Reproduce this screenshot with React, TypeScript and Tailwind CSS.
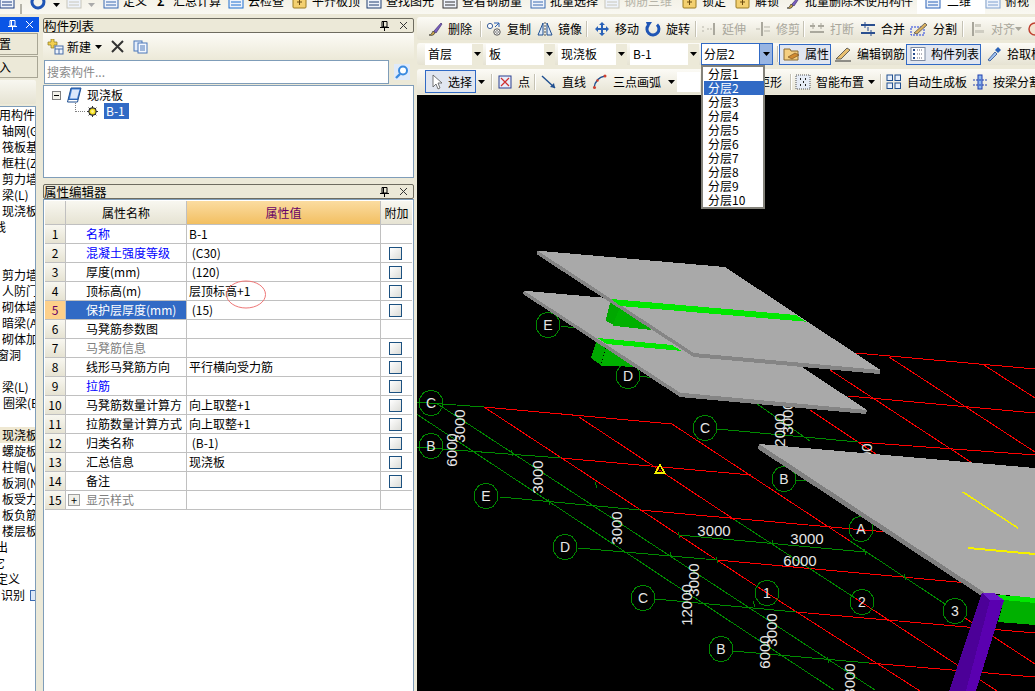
import type { ReactNode } from "react";

type Seg = [number, number, number, number];

const RED = "#ff0000";
const GREEN = "#008a00";

// ---- small toolbar icons ----
const Ic = ({ children, w = 16 }: { children: ReactNode; w?: number }) => (
  <svg width={w} height={16} viewBox={`0 0 ${w} 16`} className="shrink-0 block">
    {children}
  </svg>
);

const BrushIcon = () => (
  <Ic>
    <path d="M2 14 C4 14 5 12 6 10 L8 12 C7 14 5 15 2 14Z" fill="#c9a24a" stroke="#333" strokeWidth=".7" />
    <path d="M7 10 L14 2 L15 3 L9 12Z" fill="#7a5fc0" stroke="#403070" strokeWidth=".7" />
  </Ic>
);
const CopyIcon = () => (
  <Ic>
    <circle cx="4" cy="5" r="2.6" fill="#fff" stroke="#3a5f9a" />
    <circle cx="11" cy="11" r="3.2" fill="#fff" stroke="#555" />
    <circle cx="11" cy="11" r="1.4" fill="none" stroke="#888" />
    <path d="M8 2 L13 2 L13 6 M13 2 L9 6" fill="none" stroke="#2a5fb0" strokeWidth="1" />
  </Ic>
);
const MirrorIcon = () => (
  <Ic>
    <path d="M6 2 L6 14 L1 14Z" fill="#dfe9f7" stroke="#1f4f90" />
    <path d="M10 2 L10 14 L15 14Z" fill="#dfe9f7" stroke="#1f4f90" />
    <path d="M8 1 V15" stroke="#555" strokeDasharray="2 1" />
  </Ic>
);
const MoveIcon = () => (
  <Ic>
    <path
      d="M8 1 L11 4 H9 V7 H12 V5 L15 8 L12 11 V9 H9 V12 H11 L8 15 L5 12 H7 V9 H4 V11 L1 8 L4 5 V7 H7 V4 H5Z"
      fill="#2a62b8"
    />
  </Ic>
);
const RotateIcon = () => (
  <Ic>
    <path d="M3.5 4 A6 6 0 1 0 12 3.6" fill="none" stroke="#1f55b5" strokeWidth="3" />
    <path d="M1 1 L7 1 L3 7Z" fill="#1f55b5" />
  </Ic>
);
const ExtendIcon = () => (
  <Ic>
    <path d="M1 6 H4 M1 10 H4 M6 8 H11" stroke="#b5b3a8" strokeDasharray="2 1" />
    <path d="M13 2 V14" stroke="#aaa89d" strokeWidth="2" />
  </Ic>
);
const TrimIcon = () => (
  <Ic>
    <path d="M7 1 V15" stroke="#aaa89d" strokeWidth="2" />
    <path d="M1 8 H5 M9 6 H15 M9 10 H15" stroke="#b5b3a8" />
  </Ic>
);
const BreakIcon = () => (
  <Ic>
    <path d="M1 5 H6 M9 5 H15 M1 11 H15" stroke="#aaa89d" strokeWidth="2" />
    <path d="M4 2 V8 M12 2 V8" stroke="#aaa89d" />
  </Ic>
);
const MergeIcon = () => (
  <Ic>
    <path d="M1 4 H15 M1 12 H15" stroke="#2a4f8f" strokeWidth="2" />
    <path d="M5 1 V7 M11 9 V15 M8 6 V10" stroke="#2a4f8f" />
  </Ic>
);
const SplitIcon = () => (
  <Ic w={18}>
    <rect x="1" y="6" width="13" height="8" fill="none" stroke="#1f3fe0" strokeDasharray="2 1" />
    <path d="M4 12 L15 2 L17 4 L7 13Z" fill="#d8b060" stroke="#444" strokeWidth=".7" />
  </Ic>
);
const AlignIcon = () => (
  <Ic>
    <path d="M3 1 V15" stroke="#a8a69b" strokeWidth="2" />
    <rect x="5" y="3" width="6" height="3" fill="#cfcdc2" />
    <rect x="5" y="9" width="9" height="3" fill="#cfcdc2" />
  </Ic>
);
const CircleToolIcon = () => (
  <Ic>
    <circle cx="8" cy="8" r="6" fill="#f3e3d0" stroke="#c04030" strokeWidth="1.5" />
  </Ic>
);
const FolderIcon = () => (
  <Ic w={18}>
    <path d="M1 3 H7 L8 5 H15 V14 H1Z" fill="#f5cf80" stroke="#8a6a30" />
    <path d="M5 11 L12 7 L16 9 L9 13Z" fill="#d08a30" stroke="#6a4a20" strokeWidth=".6" />
  </Ic>
);
const PencilIcon = () => (
  <Ic w={18}>
    <path d="M2 13 L5 10 L13 2 L16 4 L7 13Z" fill="#e8c070" stroke="#444" strokeWidth=".8" />
    <path d="M1 15 H17" stroke="#333" />
  </Ic>
);
const ListIcon = () => (
  <Ic>
    <rect x="1" y="1.5" width="14" height="13" fill="#fff" stroke="#7d8aa0" />
    <path d="M3 4 H5 M3 8 H5 M3 12 H5" stroke="#2a4f8f" strokeWidth="2" />
    <path d="M7 4 H13 M7 8 H13 M7 12 H13" stroke="#667" strokeDasharray="1 1" />
  </Ic>
);
const PipetteIcon = () => (
  <Ic>
    <path d="M2 14 L9 6 L11 8 L4 15Z" fill="#9fc0ee" stroke="#2a4f8f" strokeWidth=".8" />
    <path d="M9 4 L12 1 L15 4 L12 7Z" fill="#2a62b8" />
  </Ic>
);
const CursorIcon = () => (
  <Ic>
    <path d="M4 1 L4 13 L7 10 L9 15 L11 14 L9 9 L13 9Z" fill="#fff" stroke="#555" strokeWidth=".8" />
  </Ic>
);
const PointIcon = () => (
  <Ic>
    <rect x="2" y="2" width="12" height="12" fill="#e8eefb" stroke="#2a3f90" />
    <path d="M4 4 L12 12 M12 4 L4 12" stroke="#d03030" strokeWidth="1.2" />
  </Ic>
);
const LineIcon = () => (
  <Ic>
    <path d="M1 2 L14 14" stroke="#1f4f90" strokeWidth="1.4" />
    <path d="M14 14 L9 13 L13 9Z" fill="#1f4f90" />
  </Ic>
);
const ArcIcon = () => (
  <Ic>
    <path d="M2 14 C3 7 7 3 13 2" fill="none" stroke="#1f4f90" strokeWidth="1.3" />
    <circle cx="2.5" cy="13.5" r="1.5" fill="#d04030" />
    <circle cx="5.5" cy="6.5" r="1.2" fill="#d04030" />
    <circle cx="13" cy="2" r="1.5" fill="#d04030" />
  </Ic>
);
const SmartIcon = () => (
  <Ic>
    <rect x="1" y="1" width="14" height="14" fill="#e6ecf6" stroke="#555" strokeDasharray="1 1" />
    <path d="M5 5 H6 M10 5 H11 M8 8 H9 M5 11 H6 M10 11 H11" stroke="#222" strokeWidth="2" />
  </Ic>
);
const GridIcon = () => (
  <Ic>
    {[1, 9].map((x) =>
      [1, 9].map((y) => <rect key={`${x}-${y}`} x={x} y={y} width="5.5" height="5.5" fill="#e8f0fb" stroke="#1f4f90" />),
    )}
  </Ic>
);
const BeamIcon = () => (
  <Ic>
    <rect x="6" y="1" width="4" height="14" fill="#8fb8ee" stroke="#1f3fb0" />
    <path d="M1 6 H15 M1 11 H15" stroke="#1f3fb0" strokeDasharray="2 1" />
  </Ic>
);
const DocIcon = ({ color = "#3a6ab0" }: { color?: string }) => (
  <Ic>
    <rect x="1" y="2" width="14" height="12" fill="#eef3fb" stroke={color} />
    <path d="M3 5 H13 M3 8 H13 M3 11 H13" stroke={color} />
  </Ic>
);
const LockIcon = () => (
  <Ic>
    <rect x="1" y="3" width="13" height="11" rx="1" fill="#f3d070" stroke="#9a7a20" />
    <path d="M5 8 H10 M7.5 6 V11" stroke="#6a4a10" />
  </Ic>
);
const Caret = ({ color = "#000" }: { color?: string }) => (
  <svg width="7" height="4" viewBox="0 0 7 4" className="shrink-0">
    <path d="M0 0 H7 L3.5 4Z" fill={color} />
  </svg>
);
const PinIcon = ({ color = "#000" }: { color?: string }) => (
  <svg width="9" height="10" viewBox="0 0 9 10" className="shrink-0">
    <path d="M2 0.5 H7 V6 H2Z M3.5 1 V6 M0 6.5 H9 M4.5 6.5 V10" fill="none" stroke={color} />
  </svg>
);
const CloseIcon = ({ color = "#333" }: { color?: string }) => (
  <svg width="9" height="9" viewBox="0 0 9 9" className="shrink-0">
    <path d="M1 1 L8 8 M8 1 L1 8" stroke={color} />
  </svg>
);

// ---- toolbars ----
const Tool = ({
  icon,
  label,
  className,
  gray,
}: {
  icon: ReactNode;
  label: string;
  className: string;
  gray?: boolean;
}) => (
  <div className={`flex items-center gap-[5px] shrink-0 whitespace-nowrap ${gray ? "text-[#a9a79c]" : "text-black"} ${className}`}>
    {icon}
    <span>{label}</span>
  </div>
);
const Sep = ({ className }: { className: string }) => (
  <div className={`shrink-0 h-[16px] flex ${className}`}>
    <div className="w-px h-full bg-[#c5c2b4]" />
    <div className="w-px h-full bg-white" />
  </div>
);
const Bar = ({ className, children }: { className: string; children: ReactNode }) => (
  <div className={`flex items-center overflow-hidden rounded-l-[3px] bg-gradient-to-b from-[#fcfbf6] to-[#e6e3d3] text-[12px] leading-[14px] ${className}`}>
    {children}
  </div>
);
const Combo = ({ label, w, ml }: { label: string; w: string; ml: string }) => (
  <div className={`flex h-[21px] bg-white ${w} ${ml} shrink-0`}>
    <div className="flex-1 pl-[3px] leading-[20px] whitespace-nowrap overflow-hidden">{label}</div>
    <div className="w-[11px] flex items-center justify-center bg-[#ece9d8]">
      <Caret />
    </div>
  </div>
);

const TopItem = ({ icon, label, className, gray }: { icon: ReactNode; label?: string; className: string; gray?: boolean }) => (
  <div className={`flex items-end gap-[4px] shrink-0 whitespace-nowrap ${gray ? "text-[#b5b3a8]" : "text-black"} ${className}`}>
    <div className="-mb-[2px]">{icon}</div>
    {label && <span>{label}</span>}
  </div>
);

const TopBar = () => (
  <div className="h-[14px] shrink-0 flex items-end overflow-hidden pb-[6px] text-[12px] leading-[14px] bg-gradient-to-b from-[#f4f2e8] to-[#f9f8f2]">
    <TopItem className="w-[21px] -ml-px" icon={<DocIcon color="#1f3f80" />} />
    <div className="w-[2px] h-[10px] bg-[#b5b3a8] mr-[8px] -mb-[6px] shrink-0" />
    <TopItem className="w-[23px]" icon={<RotateIcon />} />
    <div className="w-[13px] shrink-0 mb-[1px]"><Caret /></div>
    <TopItem gray className="w-[22px]" icon={<DocIcon color="#c8c6ba" />} />
    <div className="w-[15px] shrink-0 mb-[1px]"><Caret color="#aaa" /></div>
    <TopItem className="w-[54px]" label="定义" icon={<DocIcon />} />
    <div className="flex items-end w-[71px] shrink-0 gap-[8px] font-bold">
      <span className="w-[8px]">Σ</span>
      <span className="font-normal">汇总计算</span>
    </div>
    <TopItem className="w-[64px]" label="云检查" icon={<DocIcon color="#1f6fd0" />} />
    <TopItem className="w-[74px]" label="平齐板顶" icon={<LockIcon />} />
    <TopItem className="w-[76px]" label="查找图元" icon={<DocIcon color="#203f70" />} />
    <TopItem className="w-[88px]" label="查看钢筋量" icon={<DocIcon color="#333" />} />
    <TopItem className="w-[74px]" label="批量选择" icon={<DocIcon />} />
    <TopItem gray className="w-[78px]" label="钢筋三维" icon={<DocIcon color="#c8c6ba" />} />
    <TopItem className="w-[53px]" label="锁定" icon={<LockIcon />} />
    <TopItem className="w-[50px]" label="解锁" icon={<LockIcon />} />
    <TopItem className="w-[132px]" label="批量删除未使用构件" icon={<BrushIcon />} />
    <div className="flex items-end w-[68px] shrink-0 bg-white -mb-[6px] pb-[6px] pl-[8px] gap-[6px]">
      <div className="-mb-[2px]"><DocIcon color="#2a62b8" /></div>
      <span>二维</span>
    </div>
    <TopItem className="w-[50px]" label="俯视" icon={<DocIcon color="#7fa0d0" />} />
  </div>
);

// ---- left strip ----
const leftItems: [string, string][] = [
  ["用构件类型", "-ml-[1px]"],
  ["轴网(G)", "ml-[2px]"],
  ["筏板基础", "ml-[2px]"],
  ["框柱(Z)", "ml-[2px]"],
  ["剪力墙(Q)", "ml-[2px]"],
  ["梁(L)", "ml-[2px]"],
  ["现浇板(B)", "ml-[2px]"],
  ["线", "-ml-[6px]"],
  ["", ""],
  ["", ""],
  ["剪力墙", "ml-[2px]"],
  ["人防门(R)", "ml-[2px]"],
  ["砌体墙(Q)", "ml-[2px]"],
  ["暗梁(A)", "ml-[2px]"],
  ["砌体加筋", "ml-[2px]"],
  ["窗洞", "-ml-[3px]"],
  ["", ""],
  ["梁(L)", "ml-[2px]"],
  ["圈梁(B)", "ml-[3px]"],
  ["", ""],
  ["现浇板", "ml-[2px]"],
  ["螺旋板", "ml-[2px]"],
  ["柱帽(V)", "ml-[2px]"],
  ["板洞(N)", "ml-[2px]"],
  ["板受力筋", "ml-[2px]"],
  ["板负筋", "ml-[2px]"],
  ["楼层板带", "ml-[2px]"],
  ["出", "-ml-[4px]"],
  ["它", "-ml-[7px]"],
  ["定义", "-ml-[4px]"],
  ["识别", "ml-[1px]"],
];

const LeftStrip = () => (
  <div className="w-[38px] shrink-0 flex flex-col pt-[3px] text-[12px] leading-[16px]">
    <div className="h-[15px] w-[39px] bg-[#0a55e6] flex items-center justify-end gap-[8px] pr-[5px] relative">
      <PinIcon color="#fff" />
      <CloseIcon color="#fff" />
    </div>
    <div className="mt-[1px] h-[22px] border-y border-r border-[#a8a594] bg-[#ece9d8] overflow-hidden leading-[20px] -ml-px">置</div>
    <div className="mt-[1px] h-[22px] border-y border-r border-[#a8a594] bg-[#ece9d8] overflow-hidden leading-[20px] -ml-px">入</div>
    <div className="mt-[2px] h-[24px] w-[36px] rounded-r-[2px] bg-gradient-to-b from-[#f8f7f0] to-[#e6e3d3]" />
    <div className="mt-[2px] flex-1 w-[36px] border-r border-t border-[#7f9db9] bg-white overflow-hidden">
      {leftItems.map(([text, cls], i) => (
        <div key={i} className={`h-[16px] flex items-center whitespace-nowrap ${i === 20 ? "bg-[#efe8d2]" : ""}`}>
          <span className={cls}>{text}</span>
          {text === "识别" && <span className="ml-[5px] w-[6px] h-[11px] shrink-0 border border-[#3a6ab0] bg-[#dce8f8]" />}
        </div>
      ))}
    </div>
  </div>
);

// ---- middle panels ----
const PanelTitle = ({ title }: { title: string }) => (
  <div className="h-[15px] flex items-center justify-between bg-[#ece9d8] border border-[#6e6c60] rounded-[2px] text-[12.5px] leading-[13px] pr-[5px] whitespace-nowrap">
    <span>{title}</span>
    <div className="flex items-center gap-[10px]">
      <PinIcon />
      <CloseIcon />
    </div>
  </div>
);

const rows: { name: string; value: string; check: boolean; color?: string }[] = [
  { name: "名称", value: "B-1", check: false, color: "text-[#0000ff]" },
  { name: "混凝土强度等级", value: " (C30)", check: true, color: "text-[#0000ff]" },
  { name: "厚度(mm)", value: " (120)", check: true },
  { name: "顶标高(m)", value: "层顶标高+1", check: true },
  { name: "保护层厚度(mm)", value: " (15)", check: true },
  { name: "马凳筋参数图", value: "", check: false },
  { name: "马凳筋信息", value: "", check: true, color: "text-[#808080]" },
  { name: "线形马凳筋方向", value: "平行横向受力筋", check: true },
  { name: "拉筋", value: "", check: true, color: "text-[#0000ff]" },
  { name: "马凳筋数量计算方", value: "向上取整+1", check: true },
  { name: "拉筋数量计算方式", value: "向上取整+1", check: true },
  { name: "归类名称", value: " (B-1)", check: true },
  { name: "汇总信息", value: "现浇板", check: true },
  { name: "备注", value: "", check: true },
  { name: "显示样式", value: "", check: false, color: "text-[#808080]" },
];

const PropTable = () => (
  <div className="flex-1 border-x border-t border-[#7f9db9] bg-white pl-px pt-px text-[12px] leading-[18px]">
    <div className="flex h-[24px] w-[367px] border-b border-[#c0c0c0]">
      <div className="w-[21px] bg-gradient-to-b from-[#f8f7f0] to-[#e6e3d3] border-r border-[#c0c0c0]" />
      <div className="w-[121px] flex items-center justify-center bg-gradient-to-b from-[#f8f7f0] to-[#e6e3d3] border-r border-[#c0c0c0]">属性名称</div>
      <div className="w-[194px] flex items-center justify-center bg-gradient-to-b from-[#fbdca0] to-[#f2bf60] text-[#660066] border-r border-[#c0c0c0]">属性值</div>
      <div className="flex-1 flex items-center justify-center bg-gradient-to-b from-[#f8f7f0] to-[#e6e3d3]">附加</div>
    </div>
    {rows.map((r, i) => (
      <div key={r.name} className="flex h-[19px] w-[367px] border-b border-[#c0c0c0]">
        <div className={`w-[21px] text-center border-r border-[#c0c0c0] ${i === 4 ? "bg-[#fdd08a] text-[#660066]" : "bg-gradient-to-b from-[#f8f7f0] to-[#e6e3d3]"}`}>
          {i + 1}
        </div>
        <div className={`w-[121px] whitespace-nowrap overflow-hidden border-r border-[#c0c0c0] flex items-center ${i === 4 ? "bg-[#316ac5] text-white" : (r.color ?? "text-black")}`}>
          {i === 14 ? (
            <span className="w-[12px] h-[12px] ml-[2px] mr-[6px] shrink-0 border border-[#a0a0a0] bg-[#f0f0ea] flex items-center justify-center text-black text-[11px] leading-[10px]">+</span>
          ) : (
            <span className="w-[20px] shrink-0" />
          )}
          {r.name}
        </div>
        <div className="w-[194px] pl-[2px] whitespace-pre border-r border-[#c0c0c0]">{r.value}</div>
        <div className="flex-1 flex items-center justify-center pr-[2px]">
          {r.check && <div className="w-[13px] h-[13px] border border-[#1c5180] bg-gradient-to-br from-[#ffffff] to-[#dcdcd7]" />}
        </div>
      </div>
    ))}
  </div>
);

const MiddlePanels = () => (
  <div className="ml-[5px] w-[371px] shrink-0 flex flex-col pt-[4px]">
    <PanelTitle title="构件列表" />
    <div className="h-[27px] flex items-center pl-[4px] bg-gradient-to-b from-[#fcfbf6] to-[#ece9d8] text-[12px] leading-[14px]">
      <svg width="17" height="16" viewBox="0 0 17 16" className="shrink-0">
        <path d="M4 0 H7 V3 H10 V6 H7 V9 H4 V6 H1 V3 H4Z" fill="#f3cf50" stroke="#8a7a20" strokeWidth=".7" />
        <rect x="8" y="7" width="8" height="8" fill="#eef3fb" stroke="#4a6ea8" />
        <path d="M8 10 H16 M12 10 V15" stroke="#4a6ea8" />
      </svg>
      <span className="ml-[3px]">新建</span>
      <span className="ml-[4px]"><Caret /></span>
      <svg width="13" height="13" viewBox="0 0 13 13" className="ml-[9px] shrink-0">
        <path d="M1 1 L12 12 M12 1 L1 12" stroke="#333" strokeWidth="2" />
      </svg>
      <svg width="15" height="14" viewBox="0 0 15 14" className="ml-[9px] shrink-0">
        <rect x="1" y="1" width="8" height="10" fill="#e4edfa" stroke="#4a76b8" />
        <rect x="5" y="3" width="9" height="10" fill="#f4f8ff" stroke="#4a76b8" />
        <path d="M7 6 H12 M7 8 H12 M7 10 H12" stroke="#4a76b8" />
      </svg>
    </div>
    <div className="h-[24px] flex bg-[#ece9d8]">
      <div className="w-[345px] ml-px border border-[#7f9db9] bg-white text-[12px] leading-[21px] pl-[2px] text-[#8a8a8a]">搜索构件...</div>
      <div className="flex-1 flex items-center justify-center">
        <svg width="16" height="16" viewBox="0 0 16 16">
          <rect width="16" height="16" fill="#dfeafa" />
          <circle cx="9" cy="6.5" r="4" fill="#fff" stroke="#3a8ae0" strokeWidth="2" />
          <path d="M6 10 L2 14" stroke="#3a8ae0" strokeWidth="2.4" />
        </svg>
      </div>
    </div>
    <div className="mt-px h-[93px] border border-[#7f9db9] bg-white text-[12px] leading-[16px]">
      <div className="flex items-center h-[16px] mt-px pl-[8px]">
        <span className="w-[9px] h-[9px] border border-[#808080] bg-[#f3f2ea] flex items-center justify-center shrink-0">
          <span className="w-[5px] h-px bg-black" />
        </span>
        <svg width="15" height="16" viewBox="0 0 15 16" className="ml-[6px] shrink-0">
          <path d="M4 1 H14 L11 13 H1Z" fill="#3f7fd8" stroke="#1f4f90" />
          <path d="M5 2.5 H12.5 L10 11.5 H3Z" fill="#dbe8fb" />
          <path d="M1 13 L0.5 15 H10.5 L11 13" fill="#fff" stroke="#1f4f90" />
        </svg>
        <span className="ml-[5px]">现浇板</span>
      </div>
      <div className="flex items-center h-[16px] pl-[31px]">
        <span className="w-[10px] h-[9px] -mt-[8px] border-l border-b border-dotted border-[#808080] shrink-0" />
        <svg width="11" height="11" viewBox="0 0 11 11" className="ml-[2px] shrink-0">
          <circle cx="5.5" cy="5.5" r="3.6" fill="#f6e020" stroke="#333" strokeWidth="1.2" />
          <path d="M5.5 0 V2 M5.5 9 V11 M0 5.5 H2 M9 5.5 H11 M1.6 1.6 L3 3 M8 8 L9.4 9.4 M1.6 9.4 L3 8 M8 3 L9.4 1.6" stroke="#333" />
          <circle cx="5.5" cy="5.5" r="1.4" fill="#fff48a" />
        </svg>
        <span className="ml-[6px] w-[25px] h-[16px] bg-[#316ac5] text-white pl-[2px]">B-1</span>
      </div>
    </div>
    <div className="mt-[6px]">
      <PanelTitle title="属性编辑器" />
    </div>
    <PropTable />
  </div>
);

// ---- CAD view ----
const redLines: Seg[] = [
  [484, 407, 672, 424],
  [561, 458, 751, 475],
  [640, 510, 887, 532],
  [717, 560, 968, 583],
  [796, 612, 1035, 633],
  [869, 663, 1035, 677],
  [856, 353, 1035, 369],
  [848, 396, 1035, 413],
  [858, 442, 1035, 455],
  [484, 407, 767, 593],
  [767, 593, 920, 691],
  [579, 417, 735, 520],
  [855, 598, 997, 691],
  [672, 424, 850, 541],
  [965, 618, 1035, 664],
  [889, 357, 1035, 452],
  [830, 370, 1015, 491],
  [984, 365, 1035, 398],
  [810, 410, 900, 470],
];
const greenLines: Seg[] = [
  [415, 402, 484, 407],
  [415, 447, 561, 458],
  [500, 497, 640, 510],
  [578, 548, 717, 560],
  [655, 599, 796, 612],
  [733, 651, 869, 663],
  [717, 429, 858, 442],
  [796, 480, 806, 481],
  [679, 535, 865, 552],
  [561, 326, 575, 328],
  [640, 376, 654, 378],
  [415, 413, 834, 690],
  [436, 403, 875, 690],
  [735, 520, 855, 598],
  [850, 541, 945, 604],
  [750, 399, 810, 441],
];
const ticks: [number, number][] = [
  [679, 535],
  [773, 543],
  [865, 552],
  [717, 560],
  [905, 577],
  [512, 453],
  [549, 502],
  [596, 485],
  [671, 555],
  [754, 604],
  [828, 660],
];
const bubbles: [number, number, string][] = [
  [548, 325, "E"],
  [628, 376, "D"],
  [431, 403, "C"],
  [431, 446, "B"],
  [705, 428, "C"],
  [784, 479, "B"],
  [861, 529, "A"],
  [486, 496, "E"],
  [565, 547, "D"],
  [643, 598, "C"],
  [721, 649, "B"],
  [767, 593, "1"],
  [862, 602, "2"],
  [955, 611, "3"],
];
const vLabels: [number, number, string][] = [
  [460, 426, "3000"],
  [452, 450, "6000"],
  [538, 477, "3000"],
  [617, 528, "3000"],
  [694, 580, "3000"],
  [687, 605, "12000"],
  [788, 418, "3000"],
  [780, 430, "2000"],
  [772, 630, "3000"],
  [765, 652, "6000"],
  [850, 680, "3000"],
  [867, 460, "3000"],
];
const hLabels: [number, number, string][] = [
  [714, 531, "3000"],
  [807, 539, "3000"],
  [800, 561, "6000"],
];

const bubblePoints = (cx: number, cy: number) =>
  Array.from({ length: 10 }, (_, k) => {
    const a = (Math.PI * 2 * k) / 10 + Math.PI / 10;
    return `${(cx + 12.2 * Math.cos(a)).toFixed(1)},${(cy + 13 * Math.sin(a)).toFixed(1)}`;
  }).join(" ");

const CadView = () => (
  <svg viewBox="417 95 618 596" shapeRendering="crispEdges" className="block w-[618px] h-[596px] bg-black">
    {redLines.map(([a, b, c, d], i) => (
      <line key={i} x1={a} y1={b} x2={c} y2={d} stroke={RED} strokeWidth="1" />
    ))}
    {greenLines.map(([a, b, c, d], i) => (
      <line key={i} x1={a} y1={b} x2={c} y2={d} stroke={GREEN} strokeWidth="1" />
    ))}
    {ticks.map(([x, y], i) => (
      <line key={i} x1={x - 1} y1={y - 3} x2={x + 1} y2={y + 3} stroke={GREEN} />
    ))}
    {bubbles.map(([x, y, t], i) => (
      <g key={i}>
        <polygon points={bubblePoints(x, y)} fill="none" stroke={GREEN} />
        <text x={x} y={y + 5} textAnchor="middle" fontSize="14" fill="#e6e6e6" fontFamily="Liberation Sans, sans-serif">
          {t}
        </text>
      </g>
    ))}
    {vLabels.map(([x, y, t], i) => (
      <text
        key={i}
        transform={`translate(${x + 5} ${y}) rotate(-90)`}
        textAnchor="middle"
        fontSize="15"
        fill="#e6e6e6"
        fontFamily="Liberation Sans, sans-serif"
      >
        {t}
      </text>
    ))}
    {hLabels.map(([x, y, t], i) => (
      <text key={i} x={x} y={y + 5} textAnchor="middle" fontSize="15" fill="#e6e6e6" fontFamily="Liberation Sans, sans-serif">
        {t}
      </text>
    ))}

    {/* lower slab with its beam */}
    <polygon points="597.6,338 606.7,344 600.8,365 591,358" fill="#00a800" />
    <polygon points="606.7,345 640,367 600.8,365.7" fill="#00b000" />
    <polygon points="523.7,290.7 711,307 867,410 680,392.7" fill="#a9a9a9" />
    <polygon points="523.7,290.7 680,392.7 867,410 866,414 680,397 523,294" fill="#858585" />
    <polygon points="597.6,338 672,345 682,351 606.7,344" fill="#00e800" />

    {/* upper slab with its beam */}
    <polygon points="611,299 620.5,305 614.6,325 605.5,321" fill="#00a800" />
    <polygon points="620.5,306 652,330 612.6,325.7" fill="#00b000" />
    <polygon points="537.5,250.7 725,267 880.6,370 693.7,353" fill="#a9a9a9" />
    <polygon points="537.5,250.7 693.7,353 880.6,370 879.4,374 693.7,357 537,254.5" fill="#858585" />
    <polygon points="611,299 796,315 806,321.7 620.5,306" fill="#00e800" />

    {/* near slab */}
    <polygon points="998,622 1004,600 1035,603 1035,625" fill="#00b000" />
    <polygon points="996,595 1035,597 1035,603 1004,600" fill="#00e800" />
    <polygon points="759,444 1035,468 1035,598 985,593" fill="#a9a9a9" />
    <polygon points="759,444 985,593 980,595 758,449" fill="#808080" />
    <polygon points="982,593 994,593 1004,600 990,600" fill="#6a18c8" />
    <polygon points="982,593 990,600 966,691 949,691" fill="#4c0098" />
    <polygon points="990,600 1004,600 976,691 966,691" fill="#5a00b0" />
    <line x1="962.4" y1="491.7" x2="1018" y2="528" stroke="#f4f000" strokeWidth="1.5" />
    <line x1="968" y1="548" x2="1035" y2="554" stroke="#f4f000" strokeWidth="2" />
    <polygon points="660,464.5 664.5,473 655.5,473" fill="none" stroke="#f4f000" strokeWidth="1.6" />
  </svg>
);

const RightArea = () => (
  <div className="ml-[3px] w-[618px] shrink-0 flex flex-col pt-[3px]">
    <Bar className="h-[23px] pl-[10px]">
      <Tool icon={<BrushIcon />} label="删除" className="w-[53px]" />
      <Sep className="w-[6px]" />
      <Tool icon={<CopyIcon />} label="复制" className="w-[51px]" />
      <Tool icon={<MirrorIcon />} label="镜像" className="w-[49px]" />
      <Sep className="w-[8px]" />
      <Tool icon={<MoveIcon />} label="移动" className="w-[51px]" />
      <Tool icon={<RotateIcon />} label="旋转" className="w-[50px]" />
      <Sep className="w-[6px]" />
      <Tool gray icon={<ExtendIcon />} label="延伸" className="w-[54px]" />
      <Tool gray icon={<TrimIcon />} label="修剪" className="w-[48px]" />
      <Sep className="w-[6px]" />
      <Tool gray icon={<BreakIcon />} label="打断" className="w-[51px]" />
      <Tool icon={<MergeIcon />} label="合并" className="w-[50px]" />
      <Tool icon={<SplitIcon />} label="分割" className="w-[52px] gap-[3px]" />
      <Sep className="w-[8px]" />
      <Tool gray icon={<AlignIcon />} label="对齐" className="w-[45px] gap-[0px]" />
      <div className="w-[12px] shrink-0"><Caret color="#a9a79c" /></div>
      <CircleToolIcon />
    </Bar>

    <Bar className="h-[22px] mt-[3px] pl-[8px]">
      <Combo label="首层" w="w-[58px]" ml="ml-0" />
      <Combo label="板" w="w-[69px]" ml="ml-[3px]" />
      <Combo label="现浇板" w="w-[69px]" ml="ml-[3px]" />
      <Combo label="B-1" w="w-[69px]" ml="ml-[3px]" />
      <div className="ml-[2px] w-[72px] h-[22px] shrink-0 flex border border-[#316ac5] bg-white">
        <div className="flex-1 pl-[2px] leading-[20px]">分层2</div>
        <div className="w-[13px] border-l border-[#316ac5] bg-[#98b5e2] flex items-center justify-center">
          <Caret />
        </div>
      </div>
      <Sep className="w-[2px] ml-[4px]" />
      <div className="w-[52px] h-[21px] shrink-0 flex items-center gap-[4px] pl-[3px] border border-[#316ac5] bg-[#e1e6f0]">
        <FolderIcon />
        <span>属性</span>
      </div>
      <Tool icon={<PencilIcon />} label="编辑钢筋" className="w-[75px] pl-[3px] gap-[2px]" />
      <div className="w-[75px] h-[21px] shrink-0 flex items-center gap-[5px] pl-[3px] border border-[#316ac5] bg-[#e1e6f0] whitespace-nowrap">
        <ListIcon />
        <span>构件列表</span>
      </div>
      <Tool icon={<PipetteIcon />} label="拾取构件" className="pl-[5px] gap-[3px]" />
    </Bar>

    <Bar className="h-[25px] mt-[4px] pl-[8px]">
      <div className="w-[51px] h-[23px] shrink-0 flex items-center gap-[3px] pl-[3px] border border-[#316ac5] bg-[#e1e6f0]">
        <CursorIcon />
        <span>选择</span>
      </div>
      <div className="w-[15px] shrink-0 pl-[2px]"><Caret /></div>
      <Sep className="w-[6px]" />
      <Tool icon={<PointIcon />} label="点" className="w-[37px]" />
      <Sep className="w-[7px]" />
      <Tool icon={<LineIcon />} label="直线" className="w-[51px]" />
      <Tool icon={<ArcIcon />} label="三点画弧" className="w-[76px] gap-[4px]" />
      <div className="w-[7px] shrink-0"><Caret /></div>
      <div className="ml-[2px] w-[23px] h-[20px] shrink-0 bg-white" />
      <span className="ml-[58px] w-[25px] shrink-0 whitespace-nowrap">矩形</span>
      <Sep className="w-[5px] ml-[7px]" />
      <Tool icon={<SmartIcon />} label="智能布置" className="w-[73px]" />
      <div className="w-[12px] shrink-0"><Caret /></div>
      <Sep className="w-[6px]" />
      <Tool icon={<GridIcon />} label="自动生成板" className="w-[86px]" />
      <Tool icon={<BeamIcon />} label="按梁分割" />
    </Bar>

    <div className="mt-px">
      <CadView />
    </div>
  </div>
);

const LayerMenu = () => (
  <div className="absolute left-[701px] top-[65px] w-[64px] h-[144px] border-2 border-[#83827a] bg-white text-[12px] leading-[14px] pl-px">
    {[1, 2, 3, 4, 5, 6, 7, 8, 9, 10].map((n) => (
      <div key={n} className={`h-[14px] w-[60px] pl-[4px] ${n === 2 ? "bg-[#316ac5] text-white" : "text-black"}`}>
        分层{n}
      </div>
    ))}
  </div>
);

export default function App() {
  return (
    <div className="relative w-[1035px] h-[691px] overflow-hidden flex flex-col bg-[#ece9d8] text-black font-['Noto_Sans_CJK_SC',sans-serif]">
      <TopBar />
      <div className="flex flex-1 min-h-0">
        <LeftStrip />
        <MiddlePanels />
        <RightArea />
      </div>
      <LayerMenu />
      {/* hand drawn mark around the elevation value */}
      <svg width="42" height="30" viewBox="0 0 42 30" className="absolute left-[225px] top-[280px]">
        <ellipse cx="21" cy="14.5" rx="19.5" ry="13.5" fill="none" stroke="#ee7777" strokeWidth="1" />
      </svg>
    </div>
  );
}
